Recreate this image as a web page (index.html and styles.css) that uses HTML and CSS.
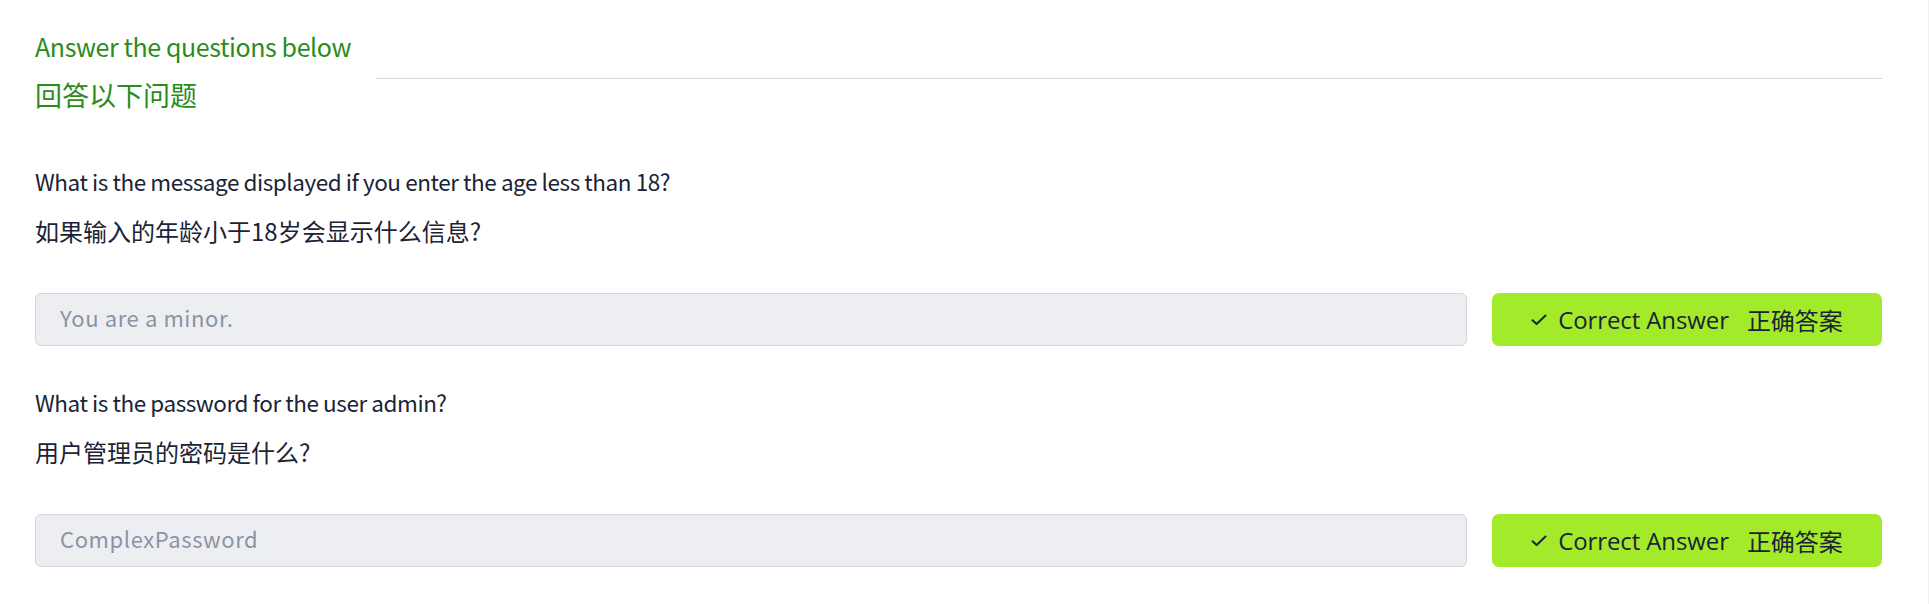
FILE: index.html
```html
<!DOCTYPE html>
<html lang="zh">
<head>
<meta charset="utf-8">
<title>Answer the questions below</title>
<link rel="stylesheet" href="styles.css">
</head>
<body>
<div class="page">
  <div class="header">
    <div class="titles">
      <div class="title">Answer the questions below</div>
      <div class="title title-cn">回答以下问题</div>
    </div>
    <div class="rule"></div>
  </div>

  <div class="question">
    <p class="q-en">What is the message displayed if you enter the age less than 18?</p>
    <p class="q-cn">如果输入的年龄小于18岁会显示什么信息?</p>
    <div class="answer-row">
      <div class="answer-input">You are a minor.</div>
      <button class="btn-correct" type="button">
        <svg class="check" viewBox="0 0 16 12" width="16" height="12"><path d="M1.5 6.2 L5.6 10 L14.5 1.5" fill="none" stroke="currentColor" stroke-width="2" stroke-linecap="round" stroke-linejoin="round"/></svg>
        <span class="btn-en">Correct Answer</span>
        <span class="btn-cn">正确答案</span>
      </button>
    </div>
  </div>

  <div class="question">
    <p class="q-en">What is the password for the user admin?</p>
    <p class="q-cn">用户管理员的密码是什么?</p>
    <div class="answer-row">
      <div class="answer-input">ComplexPassword</div>
      <button class="btn-correct" type="button">
        <svg class="check" viewBox="0 0 16 12" width="16" height="12"><path d="M1.5 6.2 L5.6 10 L14.5 1.5" fill="none" stroke="currentColor" stroke-width="2" stroke-linecap="round" stroke-linejoin="round"/></svg>
        <span class="btn-en">Correct Answer</span>
        <span class="btn-cn">正确答案</span>
      </button>
    </div>
  </div>
</div>
</body>
</html>
```

FILE: styles.css
```css
html, body {
  margin: 0;
  padding: 0;
  background: #ffffff;
}

body {
  font-family: "Noto Sans CJK SC", "Noto Sans", sans-serif;
  color: #1b2336;
}

.page {
  padding: 26px 46px 0 35px;
  border-right: 1px solid #eef0f3;
  min-height: 578px;
}

.header {
  display: flex;
  align-items: flex-start;
}

.titles {
  flex: none;
}

.title {
  font-size: 25px;
  letter-spacing: -0.4px;
  line-height: 40px;
  color: #2a8c1c;
}

.title-cn {
  font-size: 27px;
  letter-spacing: 0;
  margin-top: 9px;
}

.rule {
  flex: 1;
  height: 1px;
  background: #d3d7dd;
  margin-top: 52px;
  margin-left: 25px;
}

.question {
  margin-top: 38px;
}

.header + .question {
  margin-top: 48px;
}

.q-en,
.q-cn {
  margin: 0;
  line-height: 36px;
}

.q-en {
  font-size: 22.5px;
  letter-spacing: -0.45px;
}

.q-cn {
  font-size: 24px;
  margin-top: 14px;
}

.answer-row {
  display: flex;
  gap: 25px;
  margin-top: 44px;
}

.answer-input {
  flex: 1;
  height: 53px;
  box-sizing: border-box;
  border: 1px solid #d3d6dc;
  border-radius: 6px;
  background: #edeef2;
  color: #8a93a5;
  font-size: 22px;
  line-height: 47px;
  padding: 0 24px 4px;
  letter-spacing: 0.6px;
}

.btn-correct {
  flex: none;
  width: 390px;
  height: 53px;
  border: none;
  border-radius: 7px;
  background: #a3ea2a;
  color: #1b2336;
  display: flex;
  align-items: center;
  justify-content: center;
  padding: 0;
  cursor: pointer;
}

.check {
  display: block;
  margin-right: 11px;
}

.btn-en {
  font-family: "Open Sans", "Noto Sans", sans-serif;
  font-size: 24px;
  line-height: 30px;
  letter-spacing: -0.1px;
}

.btn-cn {
  font-family: "Noto Sans CJK SC", sans-serif;
  font-size: 24px;
  line-height: 30px;
  margin-left: 18px;
}
```
